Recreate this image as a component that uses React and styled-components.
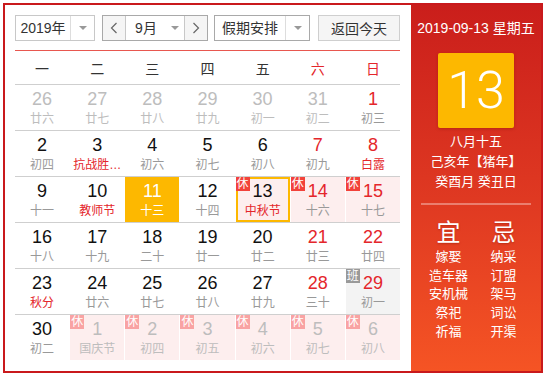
import React from 'react';
import styled, { createGlobalStyle, css } from 'styled-components';

const GlobalStyle = createGlobalStyle`
  body {
    margin: 0;
    font-family: "Liberation Sans", Arial, "Noto Sans CJK SC", sans-serif;
    background: #fff;
  }
  * { box-sizing: border-box; }
`;

const RED = '#e4262b';

const Widget = styled.div`
  margin: 3px;
  width: 540px;
  height: 370px;
  border: 2px solid #c9191c;
  display: flex;
  background: #fff;
`;

const Main = styled.div`
  flex: 1;
  padding: 10px 11px 0 10px;
`;

const Toolbar = styled.div`
  display: flex;
  height: 36px;
  padding-bottom: 10px;
  border-bottom: 1px solid #e8574f;
`;

const Select = styled.div`
  display: flex;
  height: 26px;
  width: ${p => p.$w}px;
  margin-right: ${p => p.$mr || 0}px;
  border: 1px solid ${p => p.$border || '#c8c8c8'};
  background: #fff;
  font-size: 14px;
  color: #333;
`;

const SelectText = styled.div`
  flex: 1;
  display: flex;
  align-items: center;
  justify-content: center;
  line-height: 24px;
`;

const Caret = styled.div`
  width: ${p => (p.$plain ? 18 : 24)}px;
  border-left: ${p => (p.$plain ? 'none' : '1px solid #ddd')};
  display: flex;
  align-items: center;
  justify-content: center;
  &::after {
    content: '';
    border-left: 4px solid transparent;
    border-right: 4px solid transparent;
    border-top: 4px solid #999;
  }
`;

const ArrowBtn = styled.div`
  width: 23px;
  background: #f5f5f5;
  display: flex;
  align-items: center;
  justify-content: center;
  ${p => (p.$left ? 'border-right' : 'border-left')}: 1px solid #c8c8c8;
`;

const Button = styled.div`
  width: 82px;
  height: 26px;
  border: 1px solid #cfcfcf;
  background: #f5f5f5;
  font-size: 14px;
  color: #333;
  display: flex;
  align-items: center;
  justify-content: center;
`;

const Grid = styled.div`
  display: grid;
  grid-template-columns: repeat(7, 1fr);
  column-gap: 1px;
`;

const WeekHead = styled(Grid)`
  height: 33px;
  align-items: center;
`;

const WeekDay = styled.div`
  text-align: center;
  font-size: 14px;
  color: ${p => (p.$red ? RED : '#333')};
`;

const Row = styled(Grid)`
  border-top: 1px solid #cfcfcf;
`;

const Cell = styled.div`
  position: relative;
  height: 45px;
  padding-top: 4px;
  text-align: center;
  background: ${p => p.$bg || 'transparent'};
  ${p => p.$outline && css`box-shadow: inset 0 0 0 2px #fdb800;`}
`;

const DayNum = styled.div`
  font-size: 18px;
  line-height: 20px;
  color: ${p => p.$color};
`;

const Lunar = styled.div`
  font-size: 12px;
  line-height: 18px;
  margin-top: 1px;
  color: ${p => p.$color};
`;

const Badge = styled.span`
  position: absolute;
  top: 0;
  left: 0;
  width: 14px;
  height: 14px;
  font-size: 12px;
  line-height: 14px;
  text-align: center;
  color: #fff;
  background: ${p => p.$bg};
`;

const Side = styled.div`
  width: 132px;
  background: linear-gradient(180deg, #ca1e1b 0%, #e03a22 55%, #f55424 100%);
  color: #fff;
  display: flex;
  flex-direction: column;
  align-items: center;
  padding-top: 13px;
`;

const SideDate = styled.div`
  font-size: 14px;
  line-height: 20px;
`;

const BigDay = styled.div`
  margin-top: 15px;
  width: 76px;
  height: 75px;
  border-radius: 2px;
  background: #fdb800;
  box-shadow: 0 1px 3px rgba(120, 20, 0, 0.35);
  display: flex;
  align-items: center;
  justify-content: center;
  font-family: Roboto, "Liberation Sans", sans-serif;
  font-weight: 300;
  font-size: 52px;
`;

const LunarInfo = styled.div`
  margin-top: 4px;
  font-size: 13px;
  line-height: 20px;
  text-align: center;
`;

const Divider = styled.div`
  margin-top: 11px;
  width: 110px;
  height: 2px;
  background: rgba(255, 255, 255, 0.35);
`;

const Almanac = styled.div`
  margin-top: 13px;
  width: 110px;
  display: grid;
  grid-template-columns: 1fr 1fr;
  text-align: center;
`;

const AlmanacHead = styled.div`
  font-size: 24px;
  line-height: 30px;
  text-shadow: 0 1px 2px rgba(120, 20, 0, 0.4);
`;

const AlmanacItem = styled.div`
  font-size: 13px;
  line-height: 18.7px;
`;

const Chevron = ({ left }) => (
  <svg width="8" height="12" viewBox="0 0 8 12">
    <path
      d={left ? 'M6.5 1 L1.5 6 L6.5 11' : 'M1.5 1 L6.5 6 L1.5 11'}
      fill="none"
      stroke="#666"
      strokeWidth="1.2"
    />
  </svg>
);

const weekNames = ['一', '二', '三', '四', '五', '六', '日'];

// type: o = other month, w = weekend(red num), h = holiday(pink), b = work day, s = selected, t = outlined
const weeks = [
  [['26', '廿六', 'o'], ['27', '廿七', 'o'], ['28', '廿八', 'o'], ['29', '廿九', 'o'], ['30', '初一', 'o'], ['31', '初二', 'o'], ['1', '初三', 'w']],
  [['2', '初四'], ['3', '抗战胜…', 'f'], ['4', '初六'], ['5', '初七'], ['6', '初八'], ['7', '初九', 'w'], ['8', '白露', 'wf']],
  [['9', '十一'], ['10', '教师节', 'f'], ['11', '十三', 's'], ['12', '十四'], ['13', '中秋节', 'hft'], ['14', '十六', 'hw'], ['15', '十七', 'hw']],
  [['16', '十八'], ['17', '十九'], ['18', '二十'], ['19', '廿一'], ['20', '廿二'], ['21', '廿三', 'w'], ['22', '廿四', 'w']],
  [['23', '秋分', 'f'], ['24', '廿六'], ['25', '廿七'], ['26', '廿八'], ['27', '廿九'], ['28', '三十', 'w'], ['29', '初一', 'wb']],
  [['30', '初二'], ['1', '国庆节', 'oh'], ['2', '初四', 'oh'], ['3', '初五', 'oh'], ['4', '初六', 'oh'], ['5', '初七', 'oh'], ['6', '初八', 'oh']],
];

const yi = ['嫁娶', '造车器', '安机械', '祭祀', '祈福'];
const ji = ['纳采', '订盟', '架马', '词讼', '开渠'];

const Day = ({ num, lunar, type = '' }) => {
  const other = type.includes('o');
  const sel = type.includes('s');
  const hol = type.includes('h');
  let numColor = '#111';
  let lunarColor = '#999';
  if (type.includes('w')) numColor = RED;
  if (type.includes('f')) lunarColor = RED;
  if (other) {
    numColor = '#bdbdbd';
    lunarColor = '#bdbdbd';
  }
  if (sel) {
    numColor = '#fff';
    lunarColor = '#fff';
  }
  let bg;
  if (hol) bg = '#fdeeee';
  if (type.includes('b')) bg = '#f3f3f3';
  if (sel) bg = '#fdb800';
  return (
    <Cell $bg={bg} $outline={type.includes('t')}>
      {hol && <Badge $bg={other ? '#f9a3a3' : '#f2423a'}>休</Badge>}
      {type.includes('b') && <Badge $bg="#999">班</Badge>}
      <DayNum $color={numColor}>{num}</DayNum>
      <Lunar $color={lunarColor}>{lunar}</Lunar>
    </Cell>
  );
};

const App = () => (
  <>
    <GlobalStyle />
    <Widget>
      <Main>
        <Toolbar>
          <Select $w={80} $mr={7}>
            <SelectText>2019年</SelectText>
            <Caret />
          </Select>
          <Select $w={106} $mr={6} $border="#a9a9a9">
            <ArrowBtn $left><Chevron left /></ArrowBtn>
            <SelectText>9月</SelectText>
            <Caret $plain />
            <ArrowBtn><Chevron /></ArrowBtn>
          </Select>
          <Select $w={96} $mr={8} $border="#a9a9a9">
            <SelectText>假期安排</SelectText>
            <Caret />
          </Select>
          <Button>返回今天</Button>
        </Toolbar>
        <WeekHead>
          {weekNames.map((w, i) => (
            <WeekDay key={w} $red={i > 4}>{w}</WeekDay>
          ))}
        </WeekHead>
        {weeks.map((week, i) => (
          <Row key={i}>
            {week.map(([n, l, t], j) => (
              <Day key={j} num={n} lunar={l} type={t} />
            ))}
          </Row>
        ))}
      </Main>
      <Side>
        <SideDate>2019-09-13 星期五</SideDate>
        <BigDay>13</BigDay>
        <LunarInfo>
          <div>八月十五</div>
          <div>己亥年【猪年】</div>
          <div>癸酉月 癸丑日</div>
        </LunarInfo>
        <Divider />
        <Almanac>
          <div>
            <AlmanacHead>宜</AlmanacHead>
            {yi.map(x => <AlmanacItem key={x}>{x}</AlmanacItem>)}
          </div>
          <div>
            <AlmanacHead>忌</AlmanacHead>
            {ji.map(x => <AlmanacItem key={x}>{x}</AlmanacItem>)}
          </div>
        </Almanac>
      </Side>
    </Widget>
  </>
);

export default App;
